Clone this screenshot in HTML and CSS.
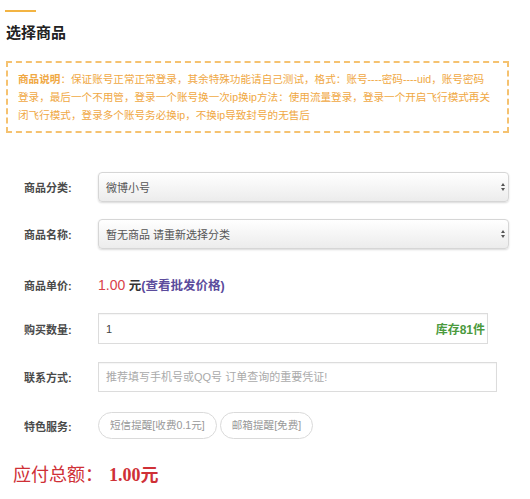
FILE: index.html
```html
<!DOCTYPE html>
<html lang="zh-CN">
<head>
    <meta charset="UTF-8">
    <meta name="viewport" content="width=device-width, initial-scale=1.0">
    <title>选择商品</title>
    <link rel="stylesheet" href="styles.css">
</head>
<body>
    <div class="wrap">
        <div class="bar"></div>
        <h2>选择商品</h2>

        <div class="notice">
            <b>商品说明</b>：保证账号正常正常登录，其余特殊功能请自己测试，格式：账号----密码----uid，账号密码<br>
            登录，最后一个不用管，登录一个账号换一次ip换ip方法：使用流量登录，登录一个开启飞行模式再关<br>
            闭飞行模式，登录多个账号务必换ip，不换ip导致封号的无售后
        </div>

        <form class="order-form">
            <div class="row row-first">
                <label>商品分类:</label>
                <div class="select-wrap">
                    <div class="select">微博小号</div>
                    <span class="arrows"></span>
                </div>
            </div>
            <div class="row">
                <label>商品名称:</label>
                <div class="select-wrap">
                    <div class="select">暂无商品 请重新选择分类</div>
                    <span class="arrows"></span>
                </div>
            </div>
            <div class="row row-price">
                <label>商品单价:</label>
                <div class="price">
                    <span class="num">1.00</span> <span class="unit">元</span><a href="#" class="pifa">(查看批发价格)</a>
                </div>
            </div>
            <div class="row row-qty">
                <label>购买数量:</label>
                <div class="qty-wrap">
                    <input type="text" class="input qty" value="1">
                    <span class="stock">库存81件</span>
                </div>
            </div>
            <div class="row row-contact">
                <label>联系方式:</label>
                <input type="text" class="input contact" placeholder="推荐填写手机号或QQ号 订单查询的重要凭证!">
            </div>
            <div class="row row-service">
                <label>特色服务:</label>
                <div class="services">
                    <span class="pill">短信提醒[收费0.1元]</span>
                    <span class="pill">邮箱提醒[免费]</span>
                </div>
            </div>
        </form>

        <div class="total">
            <span class="total-label">应付总额：</span><span class="total-num">1.00元</span>
        </div>
    </div>
</body>
</html>
```

FILE: styles.css
```css
body {
    font-family: "Liberation Sans", "Noto Sans CJK SC", sans-serif;
    background-color: #fff;
    color: #333;
    margin: 0;
    padding: 0;
}
.wrap {
    padding: 10px 21px 0 6px;
}
.bar {
    width: 31px;
    height: 2px;
    margin-left: -1px;
    background-color: #f3b443;
}
h2 {
    margin: 11px 0 0;
    font-size: 15px;
    line-height: 20px;
    color: #222;
}
.notice {
    margin-top: 18px;
    border: 2px dashed #f5c270;
    padding: 7px 8px 7px 10px;
    font-size: 10.6px;
    line-height: 18px;
    color: #f0a843;
    white-space: nowrap;
    overflow: hidden;
}
.notice b {
    font-weight: bold;
}
.order-form {
    padding-left: 18px;
}
.row {
    display: flex;
    align-items: center;
    margin-top: 17px;
}
.row-first {
    margin-top: 39px;
}
.row label {
    width: 74px;
    flex: none;
    font-size: 11px;
    font-weight: bold;
    color: #4a4a4a;
}
.select-wrap {
    position: relative;
    width: 411px;
}
.select {
    height: 30px;
    line-height: 30px;
    box-sizing: border-box;
    padding: 0 7px;
    border: 1px solid #d6d6d6;
    border-radius: 4px;
    background: linear-gradient(#ffffff, #ececec);
    box-shadow: 0 1px 2px rgba(0, 0, 0, 0.15);
    font-size: 11px;
    color: #555;
}
.arrows {
    position: absolute;
    right: 5px;
    top: 11px;
    width: 0;
    height: 0;
}
.arrows::before,
.arrows::after {
    content: "";
    position: absolute;
    left: -3px;
    border-left: 2.5px solid transparent;
    border-right: 2.5px solid transparent;
}
.arrows::before {
    top: 0;
    border-bottom: 3px solid #555;
}
.arrows::after {
    top: 5px;
    border-top: 3px solid #555;
}
.row-price {
    margin-top: 20px;
    height: 31px;
}
.price {
    font-size: 12.5px;
}
.price .num {
    font-size: 14px;
    color: #d9424a;
}
.price .unit {
    font-weight: bold;
    color: #333;
}
.pifa {
    color: #5b4b9c;
    font-weight: bold;
    text-decoration: none;
}
.row-qty {
    margin-top: 13px;
}
.qty-wrap {
    position: relative;
    width: 390px;
}
.input {
    display: block;
    box-sizing: border-box;
    height: 31px;
    padding: 0 7px;
    border: 1px solid #dcdcdc;
    box-shadow: inset 0 1px 1px rgba(0, 0, 0, 0.04);
    font-family: inherit;
    font-size: 11px;
    color: #444;
    outline: none;
}
.qty {
    width: 100%;
}
.stock {
    position: absolute;
    right: 3px;
    top: 7px;
    font-size: 12px;
    font-weight: bold;
    color: #4b9a3e;
}
.row-contact {
    margin-top: 18px;
}
.contact {
    width: 399px;
    height: 30px;
}
.contact::placeholder {
    color: #aaa;
}
.row-service {
    margin-top: 20px;
}
.services {
    display: flex;
    gap: 3px;
}
.pill {
    display: inline-block;
    height: 27px;
    line-height: 25px;
    box-sizing: border-box;
    padding: 0 11px;
    border: 1px solid #dadada;
    border-radius: 14px;
    font-size: 10.6px;
    color: #999;
}
.total {
    margin-top: 24px;
    margin-left: 7px;
    font-size: 18px;
    line-height: 24px;
    color: #cf3036;
}
.total-num {
    margin-left: 6px;
    font-family: "Liberation Serif", "Noto Sans CJK SC", serif;
    font-weight: bold;
}
```
